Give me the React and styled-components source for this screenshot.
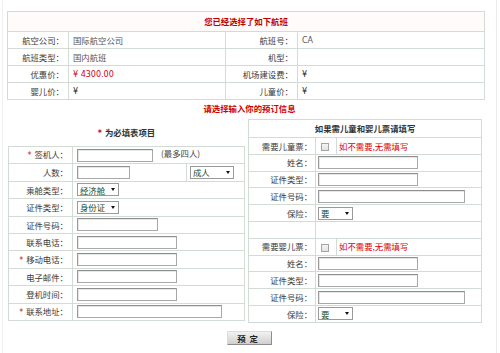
import React from "react";
import styled, { createGlobalStyle } from "styled-components";

const Global = createGlobalStyle`
  html, body { margin: 0; padding: 0; background: #fff; }
  body {
    font-family: "Noto Sans CJK SC", "DejaVu Sans", sans-serif;
    font-size: 8.4px;
    color: #333;
  }
`;

const Page = styled.div`
  box-sizing: border-box;
  width: 495px;
  height: 353px;
  margin-left: 2px;
  border-left: 1px solid #f0f0f0;
  border-right: 1px solid #ececec;
  padding: 11px 0 0 4px;
`;

const Table = styled.table`
  border-collapse: collapse;
  width: ${(p) => p.$w}px;
  table-layout: fixed;
  background: #fff;
  td {
    border: 1px solid #d3dbd5;
    padding: 0;
    height: ${(p) => p.$rh || 16}px;
    line-height: 1;
    white-space: nowrap;
  }
`;

const TitleCell = styled.td`
  && {
    height: ${(p) => p.$h || 19}px;
    text-align: center;
    font-weight: bold;
    color: ${(p) => p.$color || "#333"};
    background: ${(p) => p.$bg || "#fff"};
  }
`;

const Label = styled.td`
  && {
    text-align: right;
    padding-right: ${(p) => p.$pr || 4}px;
    color: #3a3a3a;
  }
`;

const Value = styled.td`
  && {
    padding-left: ${(p) => p.$pl || 4}px;
    color: ${(p) => p.$color || "#555"};
    background: ${(p) => p.$bg || "transparent"};
  }
`;

const Latin = styled.span`
  font-family: "DejaVu Sans", sans-serif;
  font-size: 8px;
`;

const Star = styled.span`
  color: #c8102e;
  font-family: "DejaVu Sans", sans-serif;
  font-size: 8px;
  margin-right: 3px;
`;

const SectionHead = styled.div`
  text-align: center;
  color: #d00000;
  font-weight: bold;
  width: 477px;
  margin-left: 4px;
  margin-top: 2px;
  height: 12px;
  line-height: 12px;
`;

const Columns = styled.div`
  display: flex;
  align-items: flex-start;
  margin-top: 5px;
  gap: 3px;
`;

const LeftCol = styled.div`
  display: flex;
  flex-direction: column;
  align-items: center;
  gap: 9px;
  margin: 8px 0 0 1px;
`;

const LeftTitle = styled.div`
  font-weight: bold;
  color: #333;
  height: 10px;
  line-height: 10px;
`;

const Input = styled.input`
  box-sizing: border-box;
  width: ${(p) => p.$w}px;
  height: 13px;
  margin: 0;
  padding: 0 2px;
  border: 1px solid #a8a8a8;
  border-top-color: #8f8f8f;
  border-left-color: #9a9a9a;
  box-shadow: inset 1px 1px 0 #e6e6e6;
  background: #fff;
  vertical-align: middle;
  font-size: 8px;
`;

const SelectBox = styled.span`
  box-sizing: border-box;
  display: inline-flex;
  align-items: center;
  justify-content: space-between;
  width: ${(p) => p.$w}px;
  height: 13px;
  border: 1px solid #9a9a9a;
  background: #fff;
  padding: 0 3px 0 2px;
  color: #1d4a26;
  vertical-align: middle;
  font-size: 8.4px;
`;

const Arrow = styled.span`
  width: 0;
  height: 0;
  border-left: 2.5px solid transparent;
  border-right: 2.5px solid transparent;
  border-top: 3px solid #111;
`;

const Note = styled.span`
  margin-left: 8px;
  color: #444;
`;

const Check = styled.span`
  display: inline-block;
  box-sizing: border-box;
  width: 8px;
  height: 8px;
  border: 1px solid #a5a5a5;
  background: linear-gradient(#f4f4f4, #e2e2e2);
  vertical-align: middle;
`;

const CheckCell = styled.td`
  && {
    padding-left: 5px;
  }
`;

const RedNote = styled.td`
  && {
    color: #e00000;
    padding-left: 2px;
  }
`;

const ButtonRow = styled.div`
  display: flex;
  justify-content: center;
  width: 477px;
  margin-left: 4px;
  margin-top: 8px;
`;

const Button = styled.button`
  box-sizing: border-box;
  width: 45px;
  height: 14px;
  padding: 0;
  border: 1px solid #8d8d8d;
  border-top-color: #dcdcdc;
  border-left-color: #dcdcdc;
  background: linear-gradient(#f2f2f2, #cfcfcf);
  font-family: "Noto Sans CJK SC", sans-serif;
  font-size: 8.4px;
  font-weight: bold;
  color: #222;
  letter-spacing: 4px;
  line-height: 1;
`;

const Select = ({ w, children }) => (
  <SelectBox $w={w}>
    <span>{children}</span>
    <Arrow />
  </SelectBox>
);

function FlightTable() {
  return (
    <Table $w={477} $rh={16}>
      <colgroup>
        <col style={{ width: 61 }} />
        <col style={{ width: 157 }} />
        <col style={{ width: 72 }} />
        <col style={{ width: 187 }} />
      </colgroup>
      <tbody>
        <tr>
          <TitleCell colSpan={4} $color="#c00000" $bg="#fffbfb">
            您已经选择了如下航班
          </TitleCell>
        </tr>
        <tr>
          <Label>航空公司：</Label>
          <Value>国际航空公司</Value>
          <Label>航班号：</Label>
          <Value><Latin>CA</Latin></Value>
        </tr>
        <tr>
          <Label>航班类型：</Label>
          <Value>国内航班</Value>
          <Label>机型：</Label>
          <Value />
        </tr>
        <tr>
          <Label>优惠价：</Label>
          <Value $color="#d0001a"><Latin>¥ 4300.00</Latin></Value>
          <Label>机场建设费：</Label>
          <Value $color="#222"><Latin>¥</Latin></Value>
        </tr>
        <tr>
          <Label>婴儿价：</Label>
          <Value $color="#222"><Latin>¥</Latin></Value>
          <Label>儿童价：</Label>
          <Value $color="#222"><Latin>¥</Latin></Value>
        </tr>
      </tbody>
    </Table>
  );
}

const leftRows = [
  { label: "联系电话：", w: 100 },
  { label: "移动电话：", w: 100, star: true },
  { label: "电子邮件：", w: 100 },
  { label: "登机时间：", w: 100 },
  { label: "联系地址：", w: 145, star: true },
];

function RequiredForm() {
  return (
    <LeftCol>
      <LeftTitle><Star>*</Star>为必填表项目</LeftTitle>
      <Table $w={236} $rh={16.4}>
        <colgroup>
          <col style={{ width: 64 }} />
          <col style={{ width: 114 }} />
          <col style={{ width: 58 }} />
        </colgroup>
        <tbody>
          <tr>
            <Label><Star>*</Star>签机人：</Label>
            <Value colSpan={2} $pl={4}>
              <Input $w={76} />
              <Note>(最多四人)</Note>
            </Value>
          </tr>
          <tr>
            <Label>人数：</Label>
            <Value $pl={4}><Input $w={53} /></Value>
            <Value $pl={3}><Select w={44}>成人</Select></Value>
          </tr>
          <tr>
            <Label>乘舱类型：</Label>
            <Value colSpan={2} $pl={4}><Select w={42}>经济舱</Select></Value>
          </tr>
          <tr>
            <Label>证件类型：</Label>
            <Value colSpan={2} $pl={4}><Select w={42}>身份证</Select></Value>
          </tr>
          <tr>
            <Label>证件号码：</Label>
            <Value colSpan={2} $pl={4}><Input $w={81} /></Value>
          </tr>
          {leftRows.map((r) => (
            <tr key={r.label}>
              <Label>{r.star && <Star>*</Star>}{r.label}</Label>
              <Value colSpan={2} $pl={4}><Input $w={r.w} /></Value>
            </tr>
          ))}
        </tbody>
      </Table>
    </LeftCol>
  );
}

function PassengerBlock({ kind }) {
  return (
    <>
      <tr>
        <Label $pr={3}>{kind}：</Label>
        <CheckCell><Check /></CheckCell>
        <RedNote>如不需要,无需填写</RedNote>
      </tr>
      <tr>
        <Label $pr={3}>姓名：</Label>
        <Value colSpan={2} $pl={2}><Input $w={100} /></Value>
      </tr>
      <tr>
        <Label $pr={3}>证件类型：</Label>
        <Value colSpan={2} $pl={2}><Input $w={100} /></Value>
      </tr>
      <tr>
        <Label $pr={3}>证件号码：</Label>
        <Value colSpan={2} $pl={2}><Input $w={147} /></Value>
      </tr>
      <tr>
        <Label $pr={3}>保险：</Label>
        <Value colSpan={2} $pl={2}><Select w={35}>要</Select></Value>
      </tr>
    </>
  );
}

function OptionalForm() {
  return (
    <Table $w={233} $rh={15.8}>
      <colgroup>
        <col style={{ width: 67 }} />
        <col style={{ width: 21 }} />
        <col style={{ width: 145 }} />
      </colgroup>
      <tbody>
        <tr>
          <TitleCell colSpan={3} $h={17}>如果需儿童和婴儿票请填写</TitleCell>
        </tr>
        <PassengerBlock kind="需要儿童票" />
        <tr>
          <Value />
          <Value colSpan={2} />
        </tr>
        <PassengerBlock kind="需要婴儿票" />
      </tbody>
    </Table>
  );
}

export default function App() {
  return (
    <>
      <Global />
      <Page>
        <FlightTable />
        <SectionHead>请选择输入你的预订信息</SectionHead>
        <Columns>
          <RequiredForm />
          <OptionalForm />
        </Columns>
        <ButtonRow>
          <Button>预定</Button>
        </ButtonRow>
      </Page>
    </>
  );
}
